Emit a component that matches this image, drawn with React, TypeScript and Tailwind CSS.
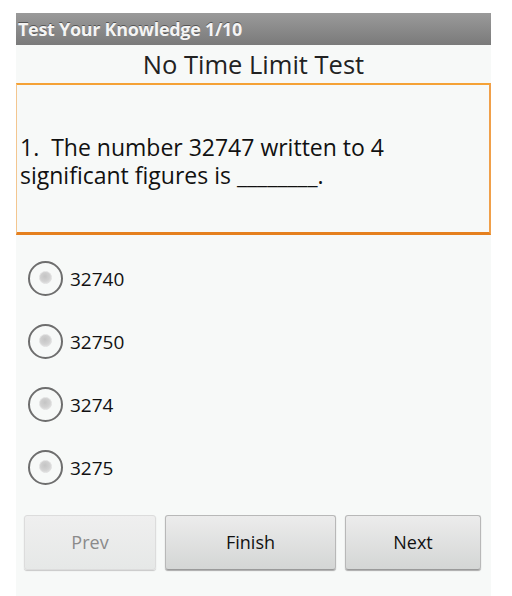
const options = ['32740', '32750', '3274', '3275'];

const Radio = () => (
  <div className="w-[35px] h-[35px] rounded-full border-2 border-[#6e6e6e] bg-[#f7f9f8] flex items-center justify-center shrink-0">
    <div className="w-[13px] h-[13px] rounded-full bg-[radial-gradient(circle_at_45%_40%,#c4c4c4_0%,#d2d2d2_55%,#ececec_100%)] border border-[#e0e0e0] -mt-[2px]" />
  </div>
);

const App = () => {
  return (
    <div className="w-[512px] h-[596px] bg-white pt-[13px] pl-[16px] pr-[21px] font-['Open_Sans','Noto_Sans',sans-serif]">
      <div className="h-[583px] bg-[#f7f9f8] flex flex-col">
        {/* Title bar */}
        <div className="h-[32px] bg-[linear-gradient(#9a9a9a,#7a7a7a)] flex items-center pl-[2px]">
          <span className="text-[18px] font-bold text-[#f4f4f4] tracking-[-0.3px] [text-shadow:0_-1px_0_#555]">
            Test Your Knowledge 1/10
          </span>
        </div>

        <div className="h-[38px] flex items-center justify-center">
          <span className="text-[25.5px] text-[#222]">No Time Limit Test</span>
        </div>

        {/* Question box */}
        <div className="h-[152px] border-t-2 border-t-[#f5a236] border-l border-l-[#f3c690] border-r-2 border-r-[#f0a04a] border-b-[3px] border-b-[#e5801f] bg-[#f7f9f8] flex items-center pl-[3px]">
          <p className="max-w-[430px] text-[23px] leading-[28px] text-[#111] mt-[4px]">
            1.&nbsp; The number 32747 written to 4 significant figures is ________.
          </p>
        </div>

        {/* Options */}
        <div className="mt-[12px] flex flex-col">
          {options.map((o) => (
            <div key={o} className="h-[63px] flex items-center pl-[12px] gap-[7px]">
              <Radio />
              <span className="text-[19px] text-[#111] mt-[2px]">{o}</span>
            </div>
          ))}
        </div>

        {/* Buttons */}
        <div className="mt-[16px] flex pl-[8px] pr-[10px] gap-[9px]">
          <button className="w-[132px] h-[55px] rounded-[3px] border border-[#dcdcdc] bg-[linear-gradient(#efefef,#e6e8e7)] text-[18px] text-[#8a8a8a] shadow-[0_1px_1px_#c8c8c8]">
            Prev
          </button>
          <button className="w-[171px] h-[55px] rounded-[3px] border border-[#b8b8b8] border-b-[#9a9a9a] bg-[linear-gradient(#ececec,#d4d6d5)] text-[18px] text-[#111] shadow-[0_1px_1px_#aaa]">
            Finish
          </button>
          <button className="w-[136px] h-[55px] rounded-[3px] border border-[#b8b8b8] border-b-[#9a9a9a] bg-[linear-gradient(#ececec,#d4d6d5)] text-[18px] text-[#111] shadow-[0_1px_1px_#aaa]">
            Next
          </button>
        </div>
      </div>
    </div>
  );
};

export default App;
